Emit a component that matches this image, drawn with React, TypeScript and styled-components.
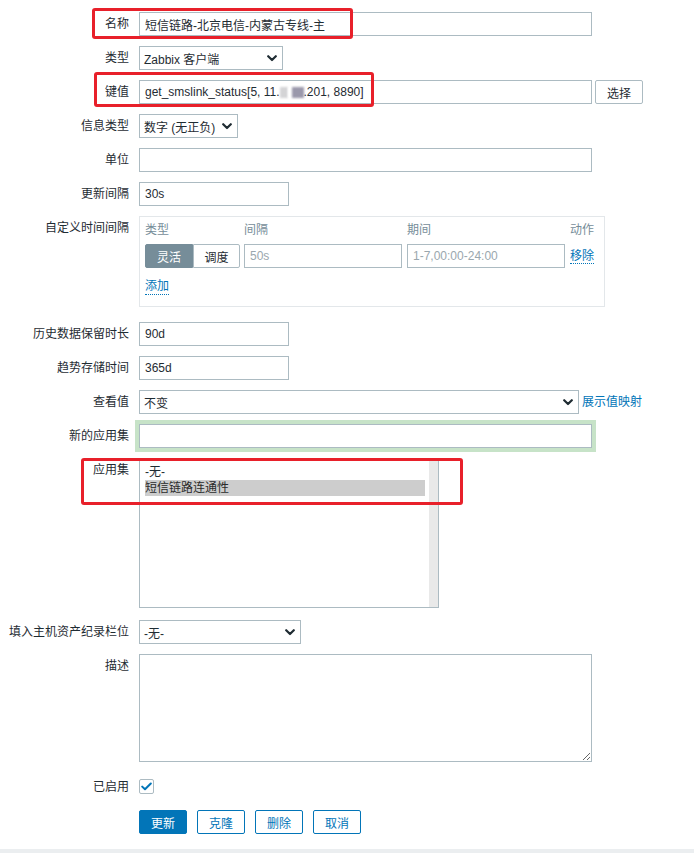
import React from 'react';
import styled, { createGlobalStyle } from 'styled-components';

const FONT = `"Liberation Sans", Arial, "Noto Sans CJK SC", sans-serif`;

const GlobalStyle = createGlobalStyle`
  html, body { margin: 0; padding: 0; background: #fff; }
  body { font-family: ${FONT}; font-size: 12px; color: #1f2c33; }
  * { box-sizing: border-box; }
`;

const Page = styled.div`
  display: flex;
  flex-direction: column;
  height: 853px;
  overflow: hidden;
`;

const Form = styled.div`
  position: relative;
  flex: 1;
  display: flex;
  flex-direction: column;
  padding-top: 12px;
`;

const Footer = styled.div`
  height: 4px;
  background: #ebeef0;
`;

const Row = styled.div<{ $mt?: number }>`
  display: grid;
  grid-template-columns: 129px 1fr;
  column-gap: 10px;
  align-items: start;
  margin-top: ${(p) => (p.$mt ?? 10)}px;
`;

const Label = styled.div`
  text-align: right;
  line-height: 24px;
  white-space: nowrap;
  color: #1f2c33;
`;

const Field = styled.div<{ $gap?: number }>`
  display: flex;
  align-items: center;
  gap: ${(p) => p.$gap ?? 3}px;
`;

const TextInput = styled.input<{ $w: number; $green?: boolean }>`
  width: ${(p) => p.$w}px;
  height: 24px;
  margin: 0;
  padding: 0 5px;
  border: 1px solid #acbbc2;
  border-radius: 0;
  background: #fff;
  color: #1f2c33;
  font: 12px ${FONT};
  outline: none;
  box-shadow: ${(p) => (p.$green ? '0 0 0 4px #c7e3c8' : 'none')};
  &::placeholder { color: #9aa7ae; }
`;

const FakeInput = styled.div<{ $w: number }>`
  width: ${(p) => p.$w}px;
  height: 24px;
  padding: 0 5px;
  border: 1px solid #acbbc2;
  display: flex;
  align-items: center;
  white-space: nowrap;
  overflow: hidden;
`;

const Blur = styled.span<{ $w: number; $c: string }>`
  display: inline-block;
  width: ${(p) => p.$w}px;
  height: 11px;
  background: ${(p) => p.$c};
  filter: blur(0.8px);
  vertical-align: middle;
`;

const SelectBox = styled.div<{ $w: number }>`
  width: ${(p) => p.$w}px;
  height: 24px;
  padding: 0 5px 0 4px;
  border: 1px solid #acbbc2;
  background: #fff;
  display: flex;
  align-items: center;
  justify-content: space-between;
  white-space: nowrap;
`;

const PlainButton = styled.div`
  width: 48px;
  height: 24px;
  border: 1px solid #acbbc2;
  border-radius: 2px;
  background: #fff;
  display: flex;
  align-items: center;
  justify-content: center;
  color: #1f2c33;
`;

const Link = styled.span<{ $dotted?: boolean }>`
  color: #0275b8;
  cursor: pointer;
  white-space: nowrap;
  border-bottom: ${(p) => (p.$dotted ? '1px dotted #0275b8' : 'none')};
  line-height: 16px;
`;

const IntervalBox = styled.div`
  width: 466px;
  border: 1px solid #e3e7ea;
  padding: 5px 10px 11px 5px;
`;

const IntervalGrid = styled.div`
  display: grid;
  grid-template-columns: 99px 163px 163px auto;
  row-gap: 6px;
  align-items: center;
`;

const HeadCell = styled.div`
  color: #768d99;
  line-height: 16px;
`;

const Segmented = styled.div`
  display: flex;
  width: 95px;
  height: 24px;
`;

const SegButton = styled.div<{ $active?: boolean; $w: number }>`
  width: ${(p) => p.$w}px;
  height: 24px;
  display: flex;
  align-items: center;
  justify-content: center;
  border: 1px solid ${(p) => (p.$active ? '#768d99' : '#acbbc2')};
  background: ${(p) => (p.$active ? '#768d99' : '#fff')};
  color: ${(p) => (p.$active ? '#fff' : '#1f2c33')};
  border-radius: ${(p) => (p.$active ? '2px 0 0 2px' : '0 2px 2px 0')};
`;

const AddRow = styled.div`
  margin-top: 10px;
  height: 17px;
  display: flex;
  align-items: flex-start;
`;

const ListBox = styled.div`
  width: 300px;
  height: 150px;
  border: 1px solid #acbbc2;
  display: flex;
`;

const ListOptions = styled.div`
  flex: 1;
  padding: 5px 4px 0 5px;
`;

const Option = styled.div<{ $sel?: boolean }>`
  line-height: 16px;
  background: ${(p) => (p.$sel ? '#cdcdcd' : 'transparent')};
  color: ${(p) => (p.$sel ? '#2b2b2b' : '#1f2c33')};
`;

const Scrollbar = styled.div`
  width: 9px;
  background: #e9e9e9;
`;

const TextArea = styled.textarea`
  width: 453px;
  height: 108px;
  margin: 0;
  padding: 4px 5px;
  border: 1px solid #acbbc2;
  border-radius: 0;
  font: 12px ${FONT};
  color: #1f2c33;
  resize: vertical;
  outline: none;
  display: block;
`;

const CheckBox = styled.div`
  width: 15px;
  height: 15px;
  margin-top: 4px;
  border: 1px solid #acbbc2;
  border-radius: 2px;
  background: #fff;
  display: flex;
  align-items: center;
  justify-content: center;
`;

const ButtonRow = styled.div`
  display: flex;
  gap: 10px;
`;

const ActionButton = styled.div<{ $primary?: boolean }>`
  width: 48px;
  height: 24px;
  border: 1px solid #0275b8;
  border-radius: 2px;
  background: ${(p) => (p.$primary ? '#0275b8' : '#fff')};
  color: ${(p) => (p.$primary ? '#fff' : '#0275b8')};
  display: flex;
  align-items: center;
  justify-content: center;
`;

const Annotation = styled.div<{ $x: number; $y: number; $w: number; $h: number }>`
  position: absolute;
  left: ${(p) => p.$x}px;
  top: ${(p) => p.$y}px;
  width: ${(p) => p.$w}px;
  height: ${(p) => p.$h}px;
  border: 3px solid #e8202a;
  border-radius: 3px;
  pointer-events: none;
`;

const Chevron = () => (
  <svg width="10" height="7" viewBox="0 0 10 7">
    <path d="M1.2 1.2 L5 5 L8.8 1.2" fill="none" stroke="#1f2c33" strokeWidth="2.2" strokeLinecap="round" strokeLinejoin="round" />
  </svg>
);

const Select = ({ w, children }: { w: number; children: React.ReactNode }) => (
  <SelectBox $w={w}>
    <span>{children}</span>
    <Chevron />
  </SelectBox>
);

export default function App() {
  return (
    <Page>
      <GlobalStyle />
      <Form>
        <Row $mt={0}>
          <Label>名称</Label>
          <Field>
            <TextInput $w={453} defaultValue="短信链路-北京电信-内蒙古专线-主" />
          </Field>
        </Row>
        <Row>
          <Label>类型</Label>
          <Field>
            <Select w={144}>Zabbix 客户端</Select>
          </Field>
        </Row>
        <Row>
          <Label>键值</Label>
          <Field>
            <FakeInput $w={453}>
              get_smslink_status[5, 11.
              <Blur $w={8} $c="#d4d4d6" />
              <Blur $w={4} $c="#fff" />
              <Blur $w={12} $c="#9a98ab" />
              .201, 8890]
            </FakeInput>
            <PlainButton>选择</PlainButton>
          </Field>
        </Row>
        <Row>
          <Label>信息类型</Label>
          <Field>
            <Select w={99}>数字 (无正负)</Select>
          </Field>
        </Row>
        <Row>
          <Label>单位</Label>
          <Field>
            <TextInput $w={453} defaultValue="" />
          </Field>
        </Row>
        <Row>
          <Label>更新间隔</Label>
          <Field>
            <TextInput $w={150} defaultValue="30s" />
          </Field>
        </Row>
        <Row>
          <Label>自定义时间间隔</Label>
          <IntervalBox>
            <IntervalGrid>
              <HeadCell>类型</HeadCell>
              <HeadCell>间隔</HeadCell>
              <HeadCell>期间</HeadCell>
              <HeadCell>动作</HeadCell>
              <Segmented>
                <SegButton $active $w={48}>灵活</SegButton>
                <SegButton $w={47}>调度</SegButton>
              </Segmented>
              <TextInput $w={158} placeholder="50s" />
              <TextInput $w={158} placeholder="1-7,00:00-24:00" />
              <div>
                <Link $dotted>移除</Link>
              </div>
            </IntervalGrid>
            <AddRow>
              <Link $dotted>添加</Link>
            </AddRow>
          </IntervalBox>
        </Row>
        <Row $mt={15}>
          <Label>历史数据保留时长</Label>
          <Field>
            <TextInput $w={150} defaultValue="90d" />
          </Field>
        </Row>
        <Row>
          <Label>趋势存储时间</Label>
          <Field>
            <TextInput $w={150} defaultValue="365d" />
          </Field>
        </Row>
        <Row>
          <Label>查看值</Label>
          <Field>
            <Select w={440}>不变</Select>
            <Link>展示值映射</Link>
          </Field>
        </Row>
        <Row>
          <Label>新的应用集</Label>
          <Field>
            <TextInput $w={453} $green defaultValue="" />
          </Field>
        </Row>
        <Row>
          <Label>应用集</Label>
          <ListBox>
            <ListOptions>
              <Option>-无-</Option>
              <Option $sel>短信链路连通性</Option>
            </ListOptions>
            <Scrollbar />
          </ListBox>
        </Row>
        <Row $mt={12}>
          <Label>填入主机资产纪录栏位</Label>
          <Field>
            <Select w={162}>-无-</Select>
          </Field>
        </Row>
        <Row>
          <Label>描述</Label>
          <div>
            <TextArea defaultValue="" />
          </div>
        </Row>
        <Row $mt={13}>
          <Label>已启用</Label>
          <div>
            <CheckBox>
              <svg width="11" height="9" viewBox="0 0 11 9">
                <path d="M1.2 4.6 L4 7.3 L9.8 1.5" fill="none" stroke="#0275b8" strokeWidth="2" strokeLinecap="round" strokeLinejoin="round" />
              </svg>
            </CheckBox>
          </div>
        </Row>
        <Row $mt={11}>
          <div />
          <ButtonRow>
            <ActionButton $primary>更新</ActionButton>
            <ActionButton>克隆</ActionButton>
            <ActionButton>删除</ActionButton>
            <ActionButton>取消</ActionButton>
          </ButtonRow>
        </Row>

        <Annotation $x={92} $y={8} $w={261} $h={31} />
        <Annotation $x={94} $y={72} $w={280} $h={35} />
        <Annotation $x={81} $y={458} $w={382} $h={47} />
      </Form>
      <Footer />
    </Page>
  );
}
